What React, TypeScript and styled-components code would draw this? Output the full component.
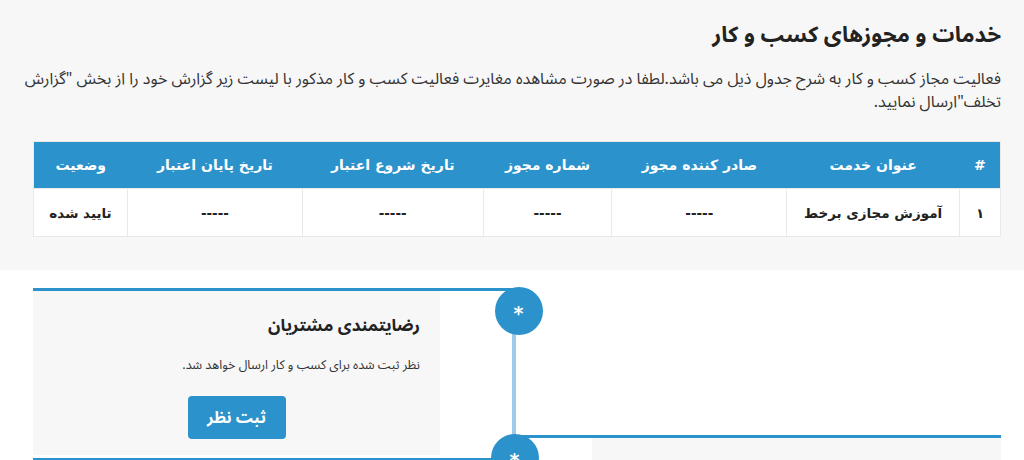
import React from "react";
import styled, { createGlobalStyle } from "styled-components";

const BLUE = "#2b92cc";
const LIGHT = "#9dcbe9";
const ARABIC = `"Noto Sans Arabic", "DejaVu Sans", sans-serif`;

const Global = createGlobalStyle`
  html, body { margin: 0; padding: 0; background: #fff; }
  body { font-family: "DejaVu Sans", sans-serif; direction: rtl; color: #222; }
  * { box-sizing: border-box; }
`;

const Intro = styled.section`
  background: #f7f7f7;
  height: 270px;
  padding: 20px 23px 0 23px;
`;

const Title = styled.h1`
  margin: 0;
  font-family: ${ARABIC};
  font-size: 22px;
  font-weight: bold;
  line-height: 30px;
  color: #222;
`;

const Lead = styled.p`
  margin: 18px 0 0;
  font-family: ${ARABIC};
  font-size: 16px;
  line-height: 23px;
  color: #333;
`;

const Table = styled.table`
  margin: 27px 0 0 10px;
  width: 968px;
  border-collapse: collapse;
  background: #fff;
  border: 1px solid #e9e9e9;
`;

const Th = styled.th<{ $w: number }>`
  width: ${(p) => p.$w}px;
  height: 47px;
  background: ${BLUE};
  color: #fff;
  font-size: 14px;
  font-weight: bold;
  text-align: center;
  padding: 0 8px;
`;

const Td = styled.td`
  height: 48px;
  border: 1px solid #e9e9e9;
  font-size: 13.5px;
  font-weight: bold;
  color: #222;
  text-align: center;
  padding: 0 8px;
`;

const Timeline = styled.section`
  display: flex;
  direction: ltr;
  padding: 18px 23px 0 33px;
`;

const Column = styled.div<{ $offset: number; $w: number }>`
  width: ${(p) => p.$w}px;
  padding-top: ${(p) => p.$offset}px;
  display: flex;
  flex-direction: column;
`;

const Item = styled.div<{ $side: "left" | "right" }>`
  position: relative;
  border-top: 3px solid ${BLUE};
  ${(p) =>
    p.$side === "left"
      ? `border-right: 4px solid ${LIGHT}; padding-bottom: 3px;`
      : `border-left: 4px solid ${LIGHT}; display: flex; justify-content: flex-end;`}
`;

const Dot = styled.div<{ $side: "left" | "right" }>`
  position: absolute;
  top: -4px;
  ${(p) => (p.$side === "left" ? "right: -31px;" : "left: -29px;")}
  width: 48px;
  height: 48px;
  border-radius: 50%;
  background: ${BLUE};
  color: #fff;
  font-family: "DejaVu Sans", sans-serif;
  font-size: 19px;
  font-weight: bold;
  display: flex;
  align-items: center;
  justify-content: center;
  z-index: 2;
`;

const Star = styled.span`
  display: block;
  line-height: 1;
  transform: translateY(2px);
`;

const Card = styled.div<{ $w: number }>`
  width: ${(p) => p.$w}px;
  background: #f7f7f7;
  direction: rtl;
  text-align: right;
  padding: 22px 20px 16px;
  min-height: 164px;
`;

const CardTitle = styled.h3`
  margin: 0;
  font-family: ${ARABIC};
  font-size: 17px;
  font-weight: bold;
  line-height: 26px;
  color: #222;
`;

const CardText = styled.p`
  margin: 16px 0 0;
  font-family: ${ARABIC};
  font-size: 12.5px;
  line-height: 20px;
  color: #333;
`;

const Button = styled.button`
  display: block;
  margin: 21px auto 0;
  width: 98px;
  height: 43px;
  border: none;
  border-radius: 4px;
  background: ${BLUE};
  color: #fff;
  font-family: ${ARABIC};
  font-size: 16px;
  font-weight: bold;
  cursor: pointer;
`;

const headers: [string, number][] = [
  ["#", 41],
  ["عنوان خدمت", 173],
  ["صادر کننده مجوز", 175],
  ["شماره مجوز", 129],
  ["تاریخ شروع اعتبار", 181],
  ["تاریخ پایان اعتبار", 175],
  ["وضعیت", 94],
];

const row = ["۱", "آموزش مجازی برخط", "-----", "-----", "-----", "-----", "تایید شده"];

export default function App() {
  return (
    <>
      <Global />
      <Intro>
        <Title>خدمات و مجوزهای کسب و کار</Title>
        <Lead>
          فعالیت مجاز کسب و کار به شرح جدول ذیل می باشد.لطفا در صورت مشاهده مغایرت فعالیت کسب و کار مذکور با لیست زیر گزارش خود را از بخش "گزارش تخلف"ارسال نمایید.
        </Lead>
        <Table>
          <thead>
            <tr>
              {headers.map(([h, w]) => (
                <Th key={h} $w={w}>
                  {h}
                </Th>
              ))}
            </tr>
          </thead>
          <tbody>
            <tr>
              {row.map((c, i) => (
                <Td key={i}>{c}</Td>
              ))}
            </tr>
          </tbody>
        </Table>
      </Intro>
      <Timeline>
        <Column $offset={0} $w={485}>
          <Item $side="left">
            <Dot $side="left">
              <Star>*</Star>
            </Dot>
            <Card $w={407}>
              <CardTitle>رضایتمندی مشتریان</CardTitle>
              <CardText>نظر ثبت شده برای کسب و کار ارسال خواهد شد.</CardText>
              <Button>ثبت نظر</Button>
            </Card>
          </Item>
          <Item $side="left">
            <Dot $side="left">
              <Star>*</Star>
            </Dot>
            <Card $w={407}>
              <CardTitle>گزارش تخلف</CardTitle>
            </Card>
          </Item>
        </Column>
        <Column $offset={147} $w={488}>
          <Item $side="right">
            <Dot $side="right">
              <Star>*</Star>
            </Dot>
            <Card $w={409}>
              <CardTitle>امتیاز کسب و کار</CardTitle>
            </Card>
          </Item>
        </Column>
      </Timeline>
    </>
  );
}
